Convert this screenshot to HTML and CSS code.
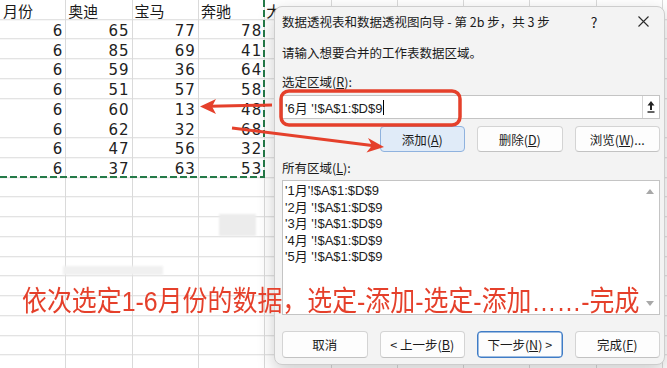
FILE: index.html
```html
<!DOCTYPE html>
<html lang="zh-CN">
<head>
  <meta charset="UTF-8" />
  <title>数据透视表和数据透视图向导</title>
  <meta name="viewport" content="width=device-width, initial-scale=1.0" />

  <link rel="stylesheet" href="styles.css">
</head>
<body>

<div class="screen">
  <div class="sheet">
    <div class="cells">
      <div class="hd">月份</div><div class="hd">奥迪</div><div class="hd">宝马</div><div class="hd">奔驰</div><div class="hd edge">大</div>
      <div class="num">6</div><div class="num">65</div><div class="num">77</div><div class="num">78</div><div></div>
      <div class="num">6</div><div class="num">85</div><div class="num">69</div><div class="num">41</div><div></div>
      <div class="num">6</div><div class="num">59</div><div class="num">36</div><div class="num">64</div><div></div>
      <div class="num">6</div><div class="num">51</div><div class="num">57</div><div class="num">58</div><div></div>
      <div class="num">6</div><div class="num">60</div><div class="num">13</div><div class="num">48</div><div></div>
      <div class="num">6</div><div class="num">62</div><div class="num">32</div><div class="num">68</div><div></div>
      <div class="num">6</div><div class="num">47</div><div class="num">56</div><div class="num">32</div><div></div>
      <div class="num">6</div><div class="num">37</div><div class="num">63</div><div class="num">53</div><div></div>
    </div>
  </div>

  <!-- copy marquee around A1:D9 -->
  <div class="marquee"></div>
  <div class="smudge s1"></div>
  <div class="smudge s2"></div>

  <div class="dialog">
    <div class="title-bar">
      <span class="title">数据透视表和数据透视图向导 - 第 2b 步，共 3 步</span>
      <span class="help">?</span>
      <span class="close">
        <svg width="11" height="11" viewBox="0 0 11 11"><path d="M0.5 0.5 L10.5 10.5 M10.5 0.5 L0.5 10.5" stroke="#2b2b2b" stroke-width="1.1" fill="none"/></svg>
      </span>
    </div>

    <div class="prompt">请输入想要合并的工作表数据区域。</div>

    <div class="label first">选定区域(<u>R</u>):</div>
    <div class="range-input">
      <span class="range-text">'6月 '!$A$1:$D$9<span class="caret"></span></span>
      <span class="collapse">
        <svg width="8" height="12" viewBox="0 0 8 12"><path d="M4 0 L7.5 4.5 L5 4.5 L5 9 L3 9 L3 4.5 L0.5 4.5 Z" fill="#222"/><rect x="0.5" y="10.3" width="7" height="1.4" fill="#222"/></svg>
      </span>
    </div>

    <div class="btn-row top">
      <button class="btn btn-add">添加(<u>A</u>)</button>
      <button class="btn">删除(<u>D</u>)</button>
      <button class="btn">浏览(<u>W</u>)...</button>
    </div>

    <div class="label">所有区域(<u>L</u>):</div>
    <div class="list">
      <div class="items">
        <div>'1月'!$A$1:$D$9</div>
        <div>'2月 '!$A$1:$D$9</div>
        <div>'3月 '!$A$1:$D$9</div>
        <div>'4月 '!$A$1:$D$9</div>
        <div>'5月 '!$A$1:$D$9</div>
      </div>
      <div class="scroll">
        <span class="tri up"></span>
        <span class="tri down"></span>
      </div>
    </div>

    <div class="btn-row bottom">
      <button class="btn">取消</button>
      <button class="btn">&lt; 上一步(<u>B</u>)</button>
      <button class="btn btn-focus">下一步(<u>N</u>) &gt;</button>
      <button class="btn">完成(<u>F</u>)</button>
    </div>
  </div>

  <div class="caption">依次选定1-6月份的数据，选定-添加-选定-添加……-完成</div>

  <svg class="marks" width="667" height="368" viewBox="0 0 667 368">
    <rect x="281" y="91" width="179" height="34" rx="8" fill="none" stroke="#e5402b" stroke-width="3.5"/>
    <path d="M272 105 L210 106.3" stroke="#e5402b" stroke-width="3" fill="none"/>
    <path d="M200 106.5 L216 99 L212 106.4 L216 114 Z" fill="#e5402b"/>
    <path d="M232 128 L374 145.8" stroke="#e5402b" stroke-width="3" fill="none"/>
    <path d="M384 147 L368 138 L372 145.6 L366.5 152.5 Z" fill="#e5402b"/>
  </svg>
</div>

</body>
</html>
```

FILE: styles.css
```css
* {
  box-sizing: border-box;
}

body {
  margin: 0;
  font-family: "Noto Sans CJK SC", sans-serif;
  background: #fff;
}

.screen {
  position: relative;
  width: 667px;
  height: 368px;
  overflow: hidden;
  background: #fff;
}

/* spreadsheet */
.sheet {
  height: 100%;
  background-image:
    repeating-linear-gradient(to right, transparent 0 65.3px, #dadada 65.3px 66.3px),
    repeating-linear-gradient(to bottom, transparent 0 18.75px, #dadada 18.75px 19.75px);
  background-position: 0 0, 0 0.25px;
}

.cells {
  display: grid;
  grid-template-columns: 65.3px 66.3px 66.3px 66.3px 66.3px;
  grid-template-rows: 20px;
  grid-auto-rows: 19.75px;
  color: #1a1a1a;
}

.cells > div {
  display: flex;
  align-items: flex-end;
  line-height: 16px;
  padding-bottom: 1px;
}

.hd {
  font-size: 15px;
  padding-left: 3px;
}

.hd.edge {
  padding-left: 2px;
}

.num {
  justify-content: flex-end;
  font-family: "DejaVu Sans", sans-serif;
  font-size: 15px;
  letter-spacing: 1px;
  padding-right: 2px;
  color: #222;
}

.marquee {
  position: absolute;
  left: 0;
  top: 0;
  width: 265px;
  height: 178px;
  background:
    repeating-linear-gradient(to right, #247a48 0 7px, transparent 7px 10px) left bottom / 100% 2px no-repeat,
    repeating-linear-gradient(to bottom, #247a48 0 7px, transparent 7px 10px) right top / 2px 100% no-repeat;
}

.smudge {
  position: absolute;
  background: #ececec;
  filter: blur(1px);
}

.s1 {
  left: 219px;
  top: 214px;
  width: 37px;
  height: 22px;
}

.s2 {
  left: 63px;
  top: 266px;
  width: 100px;
  height: 9px;
  background: #f0f0f0;
}

/* wizard dialog */
.dialog {
  position: absolute;
  left: 274px;
  top: 6px;
  width: 391px;
  height: 359px;
  padding: 0 4px 0 7px;
  background: #f3f3f3;
  border: 1px solid #cdcdcd;
  border-radius: 8px;
  box-shadow: 0 6px 18px rgba(0,0,0,0.2);
  font-size: 12.5px;
  color: #1b1b1b;
}

.title-bar {
  display: flex;
  align-items: center;
  height: 29px;
}

.help {
  margin-left: auto;
  width: 20px;
  margin-right: 28px;
  text-align: center;
  font-size: 14px;
}

.close {
  width: 22px;
  margin-right: 6px;
  display: flex;
  justify-content: center;
}

.prompt {
  margin-top: 8px;
  line-height: 18px;
}

.label {
  margin-top: 7px;
  line-height: 18px;
}

.label.first {
  margin-top: 11px;
}

.range-input {
  display: flex;
  margin-top: 4px;
  height: 24px;
  background: #fff;
  border: 1px solid #c4c4c4;
}

.range-text {
  flex: 1;
  display: flex;
  align-items: center;
  padding-left: 2px;
  font-family: "Liberation Sans", "Noto Sans CJK SC", sans-serif;
  font-size: 13px;
}

.caret {
  display: inline-block;
  width: 1px;
  height: 15px;
  background: #000;
  margin-left: 1px;
}

.collapse {
  width: 17px;
  display: flex;
  align-items: center;
  justify-content: center;
  border-left: 1px solid #d6d6d6;
}

.btn-row {
  display: grid;
  grid-template-columns: repeat(4, 1fr);
  gap: 12px;
}

.btn-row.top {
  margin-top: 7px;
  height: 26px;
}

.btn-row.top .btn:first-child {
  grid-column: 2;
}

.btn-row.bottom {
  margin-top: 16px;
  height: 27px;
}

.btn {
  height: 100%;
  padding: 0;
  font-family: inherit;
  font-size: 12.5px;
  color: #1b1b1b;
  background: #fdfdfd;
  border: 1px solid #d4d4d4;
  border-bottom-color: #c2c2c2;
  border-radius: 4px;
}

.btn-add {
  background: #e0ebf8;
  border-color: #8fb2de;
}

.btn-focus {
  border-color: #3f7cc6;
  box-shadow: inset 0 0 0 0.5px #3f7cc6;
}

.list {
  display: flex;
  margin-top: 3px;
  height: 135px;
  background: #fff;
  border: 1px solid #c4c4c4;
}

.items {
  flex: 1;
  padding: 2px 0 0 2px;
  font-family: "Liberation Sans", "Noto Sans CJK SC", sans-serif;
  font-size: 13px;
  line-height: 16.5px;
}

.scroll {
  width: 18px;
  display: flex;
  flex-direction: column;
  justify-content: space-between;
  align-items: center;
  padding: 8px 0 8px;
}

.tri {
  width: 0;
  height: 0;
  border-left: 4px solid transparent;
  border-right: 4px solid transparent;
}

.tri.up {
  border-bottom: 5px solid #a8a8a8;
}

.tri.down {
  border-top: 5px solid #a8a8a8;
}

/* tutorial overlay */
.caption {
  position: absolute;
  left: 22px;
  top: 286px;
  font-family: "Liberation Sans", "Noto Sans CJK SC", sans-serif;
  font-size: 28px;
  line-height: 32px;
  color: #e5402b;
  white-space: nowrap;
  transform: scaleX(0.89);
  transform-origin: left center;
}

.marks {
  position: absolute;
  left: 0;
  top: 0;
}
```
